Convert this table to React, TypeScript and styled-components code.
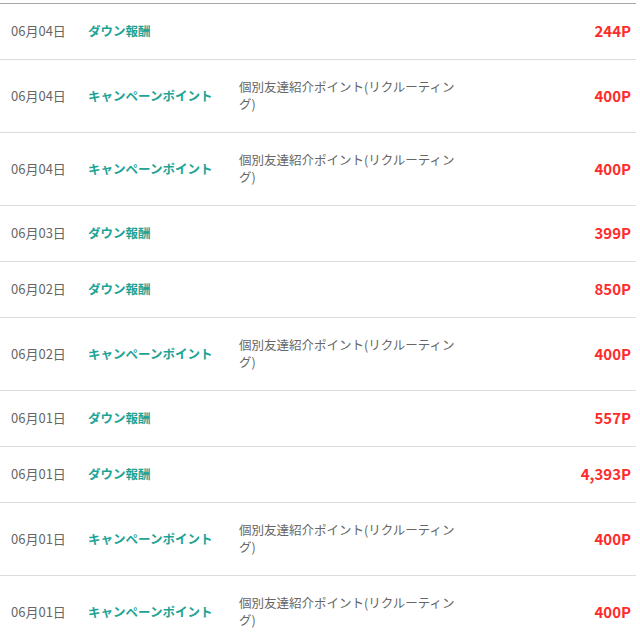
import React from "react";
import styled, { createGlobalStyle } from "styled-components";

const Global = createGlobalStyle`
  html, body { margin: 0; padding: 0; background: #fff; }
  body { font-family: "Noto Sans CJK JP", "Noto Sans", sans-serif; }
`;

const List = styled.div`
  width: 636px;
  margin-top: 3px;
  border-top: 1px solid #a8a8a8;
`;

const Row = styled.div`
  display: flex;
  align-items: center;
  padding: 18px 0 20px;
  border-bottom: 1px solid #dcdcdc;
  line-height: 17px;
  font-size: 12.5px;
`;

const DateCell = styled.div`
  width: 88px;
  padding-left: 11px;
  box-sizing: border-box;
  flex: none;
  color: #666;
  font-size: 13px;
`;

const Category = styled.div`
  width: 151px;
  flex: none;
  color: #1ea394;
  font-weight: bold;
`;

const Desc = styled.div`
  width: 220px;
  flex: none;
  color: #666;
`;

const Amount = styled.div`
  flex: 1;
  text-align: right;
  padding-right: 5px;
  color: #ff2b2b;
  font-weight: bold;
  font-size: 15px;
`;

type Item = { date: string; cat: string; desc?: string; amount: string };

const CAMP = "キャンペーンポイント";
const DOWN = "ダウン報酬";
const DESC = "個別友達紹介ポイント(リクルーティング)";

const items: Item[] = [
  { date: "06月04日", cat: DOWN, amount: "244P" },
  { date: "06月04日", cat: CAMP, desc: DESC, amount: "400P" },
  { date: "06月04日", cat: CAMP, desc: DESC, amount: "400P" },
  { date: "06月03日", cat: DOWN, amount: "399P" },
  { date: "06月02日", cat: DOWN, amount: "850P" },
  { date: "06月02日", cat: CAMP, desc: DESC, amount: "400P" },
  { date: "06月01日", cat: DOWN, amount: "557P" },
  { date: "06月01日", cat: DOWN, amount: "4,393P" },
  { date: "06月01日", cat: CAMP, desc: DESC, amount: "400P" },
  { date: "06月01日", cat: CAMP, desc: DESC, amount: "400P" },
];

export default function App() {
  return (
    <>
      <Global />
      <List>
        {items.map((it, i) => (
          <Row key={i}>
            <DateCell>{it.date}</DateCell>
            <Category>{it.cat}</Category>
            <Desc>{it.desc ?? ""}</Desc>
            <Amount>{it.amount}</Amount>
          </Row>
        ))}
      </List>
    </>
  );
}
